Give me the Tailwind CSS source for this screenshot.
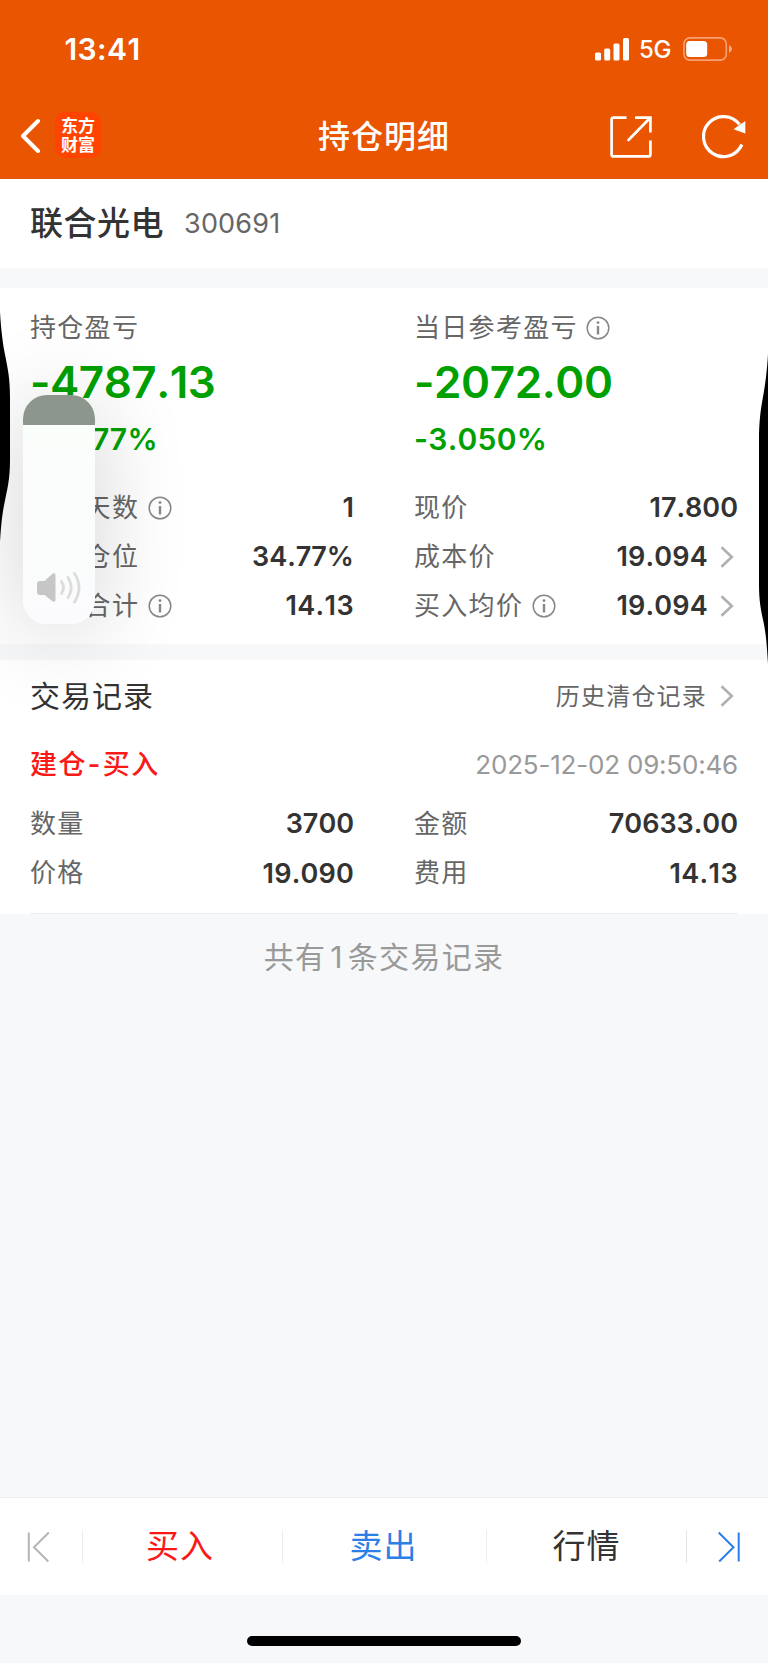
<!DOCTYPE html>
<html lang="zh-CN">
<head>
  <meta charset="UTF-8" />
  <meta name="viewport" content="width=device-width, initial-scale=1.0" />
  <title>持仓明细</title>
  <script src="https://cdn.jsdelivr.net/npm/@tailwindcss/browser@4"></script>
  <style>
    body {
      font-family: Inter, 'Noto Sans CJK SC', sans-serif;
      font-kerning: none;
    }
  </style>
</head>
<body class="relative w-[768px] h-[1663px] overflow-hidden bg-[#f6f8fa] text-[#333] flex flex-col leading-none whitespace-nowrap">

  <!-- Header -->
  <header class="h-[179px] shrink-0 bg-[#ea5502] text-white">
    <div class="h-[98px] flex items-center justify-between pl-[64.5px] pr-[36px]">
      <span class="text-[30px] font-semibold tracking-[0.4px]">13:41</span>
      <div class="flex items-center">
        <svg class="w-[34px] h-[23px]" viewBox="0 0 34 23" fill="currentColor">
          <rect x="0" y="14.5" width="6" height="8" rx="1.5" />
          <rect x="9.2" y="10.5" width="6" height="12" rx="1.5" />
          <rect x="18.5" y="5.5" width="6" height="17" rx="1.5" />
          <rect x="28" y="0" width="6" height="22.5" rx="1.5" />
        </svg>
        <span class="ml-[10px] pt-[2px] w-[33px] text-[24px] font-medium tracking-[-0.3px]">5G</span>
        <svg class="ml-[11px] w-[49px] h-[24px]" viewBox="0 0 49 24" fill="none">
          <rect x="0.9" y="0.9" width="42.4" height="22.2" rx="6" stroke="#fff" stroke-opacity=".45" stroke-width="1.6" />
          <rect x="3.2" y="4" width="21" height="16" rx="3.5" fill="#fff" />
          <path d="M46 8v8q3-1.5 3-4t-3-4z" fill="#fff" fill-opacity=".5" />
        </svg>
      </div>
    </div>
    <div class="h-[77px] relative flex items-center justify-between pl-[20px] pr-[22px]">
      <div class="flex items-center pb-[3px]">
        <svg class="w-[22px] h-[36px]" viewBox="0 0 22 36" fill="none" stroke="currentColor" stroke-width="4" stroke-linecap="round" stroke-linejoin="round">
          <path d="M18 4L3 19L18 34" />
        </svg>
        <div class="ml-[13px] w-[46px] h-[46px] rounded-[10px] bg-[#ff4400] flex flex-col items-center justify-center pt-px text-[17px] leading-[19px] font-bold">
          <span>东方</span>
          <span>财富</span>
        </div>
      </div>
      <h1 class="absolute left-[318px] text-[32px] font-medium tracking-[1px]">持仓明细</h1>
      <div class="flex items-center gap-[50px]">
        <svg class="w-[42px] h-[42px]" viewBox="0 0 42 42" fill="none" stroke="currentColor" stroke-width="2.7">
          <path d="M16.5 1.6H3.6Q1.6 1.6 1.6 3.6V38.4Q1.6 40.4 3.6 40.4H38.4Q40.4 40.4 40.4 38.4V24.5M25 1.6H40.4V16.5" />
          <path d="M39.5 2.500L18.5 24" stroke-linecap="round" />
        </svg>
        <svg class="w-[44px] h-[44px]" viewBox="0 0 44 44" fill="none" stroke="currentColor" stroke-width="3.2">
          <path d="M39.9 29.5A20 20 0 1 1 37.5 9.5" />
          <path d="M43.3 6V18.5L31.5 14.3Z" fill="currentColor" stroke="none" />
        </svg>
      </div>
    </div>
  </header>

  <!-- Stock name -->
  <section class="h-[89px] shrink-0 bg-white flex items-center px-[30px]">
    <span class="text-[33px] font-medium tracking-[0.5px]">联合光电</span>
    <span class="ml-[20px] text-[27px] text-[#666] tracking-[0.2px]">300691</span>
  </section>

  <!-- Profit and position -->
  <section class="mt-[20px] h-[356px] shrink-0 bg-white grid grid-cols-2 pt-[15px]">
    <div class="pl-[30px] pr-[30px]">
      <div class="h-[50px] flex items-center text-[26px] text-[#666] tracking-[1.3px]">持仓盈亏</div>
      <div class="h-[58px] flex items-center text-[44px] font-semibold text-[#00a000] tracking-[-0.5px]">-4787.13</div>
      <div class="h-[56px] flex items-center text-[30px] font-semibold text-[#00a000] tracking-[0.5px]">-6.777%</div>
      <div class="mt-[16px] h-[49px] flex items-center">
        <span class="text-[26px] text-[#666] tracking-[1.3px]">持仓天数</span>
        <svg class="ml-[8.5px] w-[24px] h-[24px]" viewBox="0 0 24 24" fill="none" stroke="#888" stroke-width="1.5"><circle cx="12" cy="12" r="10.8" /><path d="M12 10V18.5" stroke-width="2.4" /><circle cx="12" cy="6.6" r="1.4" fill="#888" stroke="none" /></svg>
        <span class="ml-auto text-[27px] font-semibold">1</span>
      </div>
      <div class="h-[49px] flex items-center">
        <span class="text-[26px] text-[#666] tracking-[1.3px]">个股仓位</span>
        <span class="ml-auto text-[27px] font-semibold">34.77%</span>
      </div>
      <div class="h-[49px] flex items-center">
        <span class="text-[26px] text-[#666] tracking-[1.3px]">税费合计</span>
        <svg class="ml-[8.5px] w-[24px] h-[24px]" viewBox="0 0 24 24" fill="none" stroke="#888" stroke-width="1.5"><circle cx="12" cy="12" r="10.8" /><path d="M12 10V18.5" stroke-width="2.4" /><circle cx="12" cy="6.6" r="1.4" fill="#888" stroke="none" /></svg>
        <span class="ml-auto text-[27px] font-semibold tracking-[0.4px]">14.13</span>
      </div>
    </div>
    <div class="pl-[30px] pr-[30px]">
      <div class="h-[50px] flex items-center text-[26px] text-[#666] tracking-[1.3px]">
        当日参考盈亏
        <svg class="ml-[8.5px] w-[24px] h-[24px]" viewBox="0 0 24 24" fill="none" stroke="#888" stroke-width="1.5"><circle cx="12" cy="12" r="10.8" /><path d="M12 10V18.5" stroke-width="2.4" /><circle cx="12" cy="6.6" r="1.4" fill="#888" stroke="none" /></svg>
      </div>
      <div class="h-[58px] flex items-center text-[44px] font-semibold text-[#00a000] tracking-[-0.4px]">-2072.00</div>
      <div class="h-[56px] flex items-center text-[30px] font-semibold text-[#00a000] tracking-[0.3px]">-3.050%</div>
      <div class="mt-[16px] h-[49px] flex items-center">
        <span class="text-[26px] text-[#666] tracking-[1.3px]">现价</span>
        <span class="ml-auto text-[27px] font-semibold">17.800</span>
      </div>
      <div class="h-[49px] flex items-center">
        <span class="text-[26px] text-[#666] tracking-[1.3px]">成本价</span>
        <span class="ml-auto text-[27px] font-semibold tracking-[0.2px]">19.094</span>
        <svg class="ml-[12px] mr-[4px] w-[14px] h-[22px]" viewBox="0 0 14 22" fill="none" stroke="#b0b0b0" stroke-width="2.6"><path d="M1.5 1.2L11.8 11L1.5 20.8" /></svg>
      </div>
      <div class="h-[49px] flex items-center">
        <span class="text-[26px] text-[#666] tracking-[1.3px]">买入均价</span>
        <svg class="ml-[8.5px] w-[24px] h-[24px]" viewBox="0 0 24 24" fill="none" stroke="#888" stroke-width="1.5"><circle cx="12" cy="12" r="10.8" /><path d="M12 10V18.5" stroke-width="2.4" /><circle cx="12" cy="6.6" r="1.4" fill="#888" stroke="none" /></svg>
        <span class="ml-auto text-[27px] font-semibold tracking-[0.2px]">19.094</span>
        <svg class="ml-[12px] mr-[4px] w-[14px] h-[22px]" viewBox="0 0 14 22" fill="none" stroke="#b0b0b0" stroke-width="2.6"><path d="M1.5 1.2L11.8 11L1.5 20.8" /></svg>
      </div>
    </div>
  </section>

  <!-- Trade records -->
  <section class="mt-[16px] h-[254px] shrink-0 bg-white px-[30px]">
    <div class="h-[71px] flex items-center">
      <h2 class="text-[30px] tracking-[1px]">交易记录</h2>
      <span class="ml-auto pt-[2px] text-[24px] text-[#666] tracking-[1.2px]">历史清仓记录</span>
      <svg class="ml-[13px] mr-[4px] w-[14px] h-[22px]" viewBox="0 0 14 22" fill="none" stroke="#b0b0b0" stroke-width="2.6"><path d="M1.5 1.2L11.8 11L1.5 20.8" /></svg>
    </div>
    <div class="h-[67px] flex items-center justify-between">
      <span class="text-[27px] font-medium text-[#fa1919] tracking-[1.4px]">建仓<span class="mx-[1px] font-semibold">-</span>买入</span>
      <span class="text-[26px] text-[#999] tracking-[-0.2px]">2025-12-02 09:50:46</span>
    </div>
    <div class="h-[116px] pb-[15px] pt-px grid grid-cols-2 gap-x-[60px] border-b border-[#eee]">
      <div class="flex items-center justify-between"><span class="text-[26px] text-[#666] tracking-[1.3px]">数量</span><span class="text-[27px] font-semibold">3700</span></div>
      <div class="flex items-center justify-between"><span class="text-[26px] text-[#666] tracking-[1.3px]">金额</span><span class="text-[27px] font-semibold">70633.00</span></div>
      <div class="flex items-center justify-between"><span class="text-[26px] text-[#666] tracking-[1.3px]">价格</span><span class="text-[27px] font-semibold tracking-[0.2px]">19.090</span></div>
      <div class="flex items-center justify-between"><span class="text-[26px] text-[#666] tracking-[1.3px]">费用</span><span class="text-[27px] font-semibold tracking-[0.4px]">14.13</span></div>
    </div>
  </section>
  <p class="h-[86px] shrink-0 flex items-center justify-center text-[30px] text-[#999] tracking-[1.3px]">共有<span class="mx-[4px]">1</span>条交易记录</p>

  <!-- Bottom bar -->
  <nav class="mt-auto h-[98px] shrink-0 bg-white border-t border-[#eee] flex items-center text-[33px] tracking-[1px]">
    <a href="#" class="w-[82px] pl-[27px]">
      <svg class="w-[24px] h-[32px]" viewBox="0 0 24 32" fill="none" stroke="#b5b5b5" stroke-width="2"><path d="M1.8 1.5V30.5M21.8 1.5L7 16.3L21.3 30.5" /></svg>
    </a>
    <a href="#" class="w-[200px] h-[33px] border-l border-[#eee] flex items-center justify-center pr-[5px] text-[#fa1919]">买入</a>
    <a href="#" class="w-[204px] h-[33px] border-l border-[#eee] flex items-center justify-center pr-[2px] text-[#2b7fe6]">卖出</a>
    <a href="#" class="w-[200px] h-[33px] border-l border-[#eee] flex items-center justify-center">行情</a>
    <a href="#" class="w-[82px] h-[33px] border-l border-[#e6e6e6] flex items-center pl-[31px]">
      <svg class="w-[24px] h-[32px]" viewBox="0 0 24 32" fill="none" stroke="#2b7fe6" stroke-width="2"><path d="M20.7 1.5V30.5M0.7 1.5L15.5 16.3L1.2 30.5" /></svg>
    </a>
  </nav>
  <div class="h-[68px] shrink-0 flex justify-center pt-[41px]">
    <div class="w-[274px] h-[10px] rounded-full bg-black"></div>
  </div>

  <!-- Side bulges and volume slider -->
  <svg class="absolute left-0 top-[310px] w-[10px] h-[234px]" viewBox="0 0 10 234"><path d="M0 2C1 20 3 34 4.5 42C8 60 10 68 10 88V150C10 170 7 180 4.5 193C2 205 1 216 0 232Z" /></svg>
  <svg class="absolute right-0 top-[354px] w-[10px] h-[310px]" viewBox="0 0 10 310"><path d="M10 0C9 18 7 32 5 43C2.500 56 1 68 1 86V230C1 248 3 256 5.500 268C8 280 9 292 10 310Z" /></svg>
  <div class="absolute left-[22.5px] top-[395px] w-[72.5px] h-[229px] rounded-[24px] shadow-[0_8px_90px_rgba(0,0,0,0.18)]">
    <div class="h-full rounded-[24px] overflow-hidden bg-linear-to-b from-[#fafefa] to-[#fbfbfd] flex flex-col">
      <div class="h-[30px] bg-[#8c968d]"></div>
      <svg class="mt-auto mb-[19px] ml-[13px] w-[46px] h-[34px]" viewBox="0 0 46 34" fill="none">
        <path d="M4 10H8.500L16.500 2.800Q19.500 1 19.500 4.500V28.500Q19.500 32 16.500 30.200L8.500 24H4Q1 24 1 21V13Q1 10 4 10Z" fill="#c6c6c6" />
        <g stroke="#dcdcdc" stroke-width="2.8" stroke-linecap="round"><path d="M25.500 10.500Q29.500 16.500 25.500 22.500" /><path d="M32 6.500Q38.500 16.500 32 26.500" /><path d="M38.500 2.500Q47.500 16.500 38.500 31" /></g>
      </svg>
    </div>
  </div>

</body>
</html>
